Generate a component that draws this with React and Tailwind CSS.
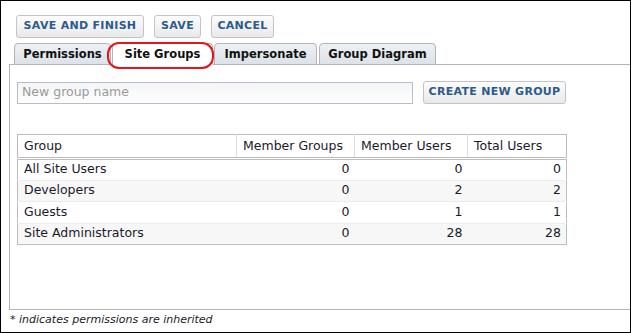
import React from "react";

const rows = [
  ["All Site Users", "0", "0", "0"],
  ["Developers", "0", "2", "2"],
  ["Guests", "0", "1", "1"],
  ["Site Administrators", "0", "28", "28"],
];

function Btn({ children, className = "" }) {
  return (
    <div
      className={`h-[23px] flex items-center justify-center border border-[#c4c4c4] rounded-[3px] bg-gradient-to-b from-[#fdfdfd] to-[#e9e9e9] text-[11px] font-bold text-[#2b5b8c] tracking-[0.3px] ${className}`}
    >
      {children}
    </div>
  );
}

function Tab({ children, active, className = "" }) {
  return (
    <div
      className={`h-[22px] flex items-center justify-center border border-[#b4b4b4] rounded-t-[4px] text-[11.5px] font-bold text-[#111] pt-[1px] ${
        active ? "bg-white border-b-white" : "bg-gradient-to-b from-[#eef1f4] to-[#dce2e8]"
      } ${className}`}
    >
      {children}
    </div>
  );
}

export default function App() {
  return (
    <div
      className="relative w-[631px] h-[333px] bg-white border border-black overflow-hidden flex flex-col"
      style={{ fontFamily: '"DejaVu Sans", Verdana, sans-serif' }}
    >
      <div className="flex gap-[10px] pl-[15px] pt-[14px]">
        <Btn className="w-[128px]">SAVE AND FINISH</Btn>
        <Btn className="w-[47px]">SAVE</Btn>
        <Btn className="w-[63px]">CANCEL</Btn>
      </div>
      <div className="flex gap-[1px] pl-[13px] mt-[5px] relative z-10">
        <Tab className="w-[97px]">Permissions</Tab>
        <Tab className="w-[101px]" active>
          Site Groups
        </Tab>
        <Tab className="w-[103px]">Impersonate</Tab>
        <Tab className="w-[117px] ml-[1px]">Group Diagram</Tab>
      </div>
      <div className="ml-[8px] mt-[-1px] h-[246px] border border-r-0 border-[#b4b4b4] px-[7px] pt-[16px]">
        <div className="flex items-center gap-[10px]">
          <div className="w-[396px] h-[22px] border border-[#b7bccc] bg-gradient-to-b from-[#f4f5f8] to-white flex items-center px-[4px] text-[12.5px] text-[#9a9a9a]">
            New group name
          </div>
          <Btn className="w-[143px]">CREATE NEW GROUP</Btn>
        </div>
        <table className="mt-[30px] w-[550px] border-collapse border border-[#bdbdbd] text-[12.5px] text-[#1a1a2a]">
          <thead>
            <tr className="h-[24px] border-b-[3px] border-double border-[#bdbdbd]">
              <th className="w-[219px] text-left font-normal pl-[6px]">Group</th>
              <th className="w-[118px] text-left font-normal pl-[6px] border-l border-[#dcdcdc]">Member Groups</th>
              <th className="w-[113px] text-left font-normal pl-[6px] border-l border-[#dcdcdc]">Member Users</th>
              <th className="text-left font-normal pl-[6px] border-l border-[#dcdcdc]">Total Users</th>
            </tr>
          </thead>
          <tbody>
            {rows.map((r, i) => (
              <tr
                key={r[0]}
                className={`h-[21.5px] border-t border-[#ececec] ${i % 2 ? "bg-[#f7f7f7]" : "bg-white"}`}
              >
                <td className="pl-[6px]">{r[0]}</td>
                <td className="text-right pr-[5px]">{r[1]}</td>
                <td className="text-right pr-[5px]">{r[2]}</td>
                <td className="text-right pr-[5px]">{r[3]}</td>
              </tr>
            ))}
          </tbody>
        </table>
      </div>
      <div className="pl-[9px] pt-[2px] text-[11px] italic text-[#1a1a2a]">* indicates permissions are inherited</div>
      <div className="absolute left-[106px] top-[41px] w-[107px] h-[27px] border-2 border-[#e3141b] rounded-[12px] z-20 pointer-events-none" />
    </div>
  );
}
